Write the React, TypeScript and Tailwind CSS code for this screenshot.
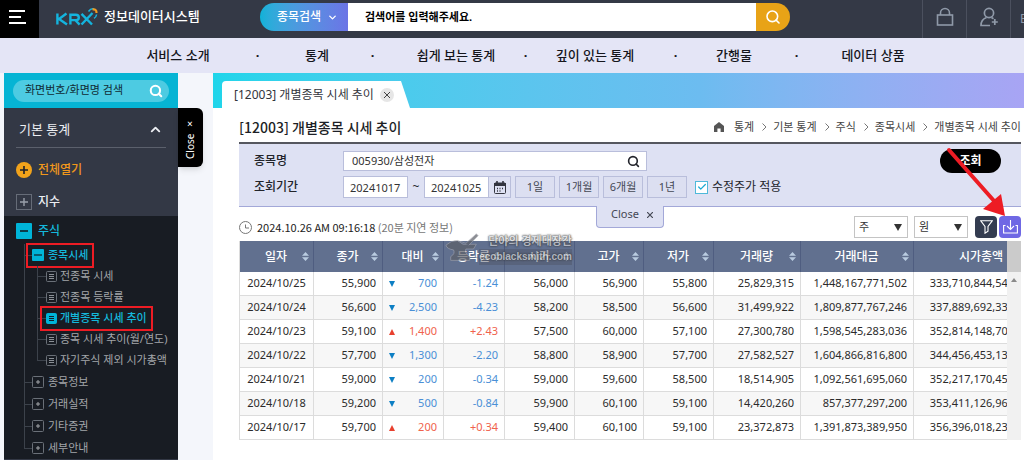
import { useState } from "react";
import { ChevronDown, ChevronUp, Search, Check } from "lucide-react";

type Quote = {
    date: string;
    close: string;
    diff: string;
    rate: string;
    up: boolean;
    open: string;
    high: string;
    low: string;
    volume: string;
    value: string;
    cap: string;
};

const QUOTES: Quote[] = [
    { date: "2024/10/25", close: "55,900", diff: "700", rate: "-1.24", up: false, open: "56,000", high: "56,900", low: "55,800", volume: "25,829,315", value: "1,448,167,771,502", cap: "333,710,844,545,000" },
    { date: "2024/10/24", close: "56,600", diff: "2,500", rate: "-4.23", up: false, open: "58,200", high: "58,500", low: "56,600", volume: "31,499,922", value: "1,809,877,767,246", cap: "337,889,692,330,000" },
    { date: "2024/10/23", close: "59,100", diff: "1,400", rate: "+2.43", up: true, open: "57,500", high: "60,000", low: "57,100", volume: "27,300,780", value: "1,598,545,283,036", cap: "352,814,148,705,000" },
    { date: "2024/10/22", close: "57,700", diff: "1,300", rate: "-2.20", up: false, open: "58,800", high: "58,900", low: "57,700", volume: "27,582,527", value: "1,604,866,816,800", cap: "344,456,453,135,000" },
    { date: "2024/10/21", close: "59,000", diff: "200", rate: "-0.34", up: false, open: "59,000", high: "59,600", low: "58,500", volume: "18,514,905", value: "1,092,561,695,060", cap: "352,217,170,450,000" },
    { date: "2024/10/18", close: "59,200", diff: "500", rate: "-0.84", up: false, open: "59,900", high: "60,100", low: "59,100", volume: "14,420,260", value: "857,377,297,200", cap: "353,411,126,960,000" },
    { date: "2024/10/17", close: "59,700", diff: "200", rate: "+0.34", up: true, open: "59,400", high: "60,100", low: "59,100", volume: "23,372,873", value: "1,391,873,389,950", cap: "356,396,018,235,000" },
];

const COLUMNS = [
    { label: "일자", width: "w-[74px]" },
    { label: "종가", width: "w-[69px]" },
    { label: "대비", width: "w-[61px]" },
    { label: "등락률", width: "w-[61px]" },
    { label: "시가", width: "w-[70px]" },
    { label: "고가", width: "w-[69px]" },
    { label: "저가", width: "w-[70px]" },
    { label: "거래량", width: "w-[87px]" },
    { label: "거래대금", width: "w-[113px]" },
    { label: "시가총액", width: "w-[129px]" },
];

const NAV = [
    { label: "서비스 소개", width: "w-16", gap: "w-[95px]" },
    { label: "통계", width: "w-6", gap: "w-[87px]" },
    { label: "쉽게 보는 통계", width: "w-20", gap: "w-[59px]" },
    { label: "깊이 있는 통계", width: "w-20", gap: "w-[81px]" },
    { label: "간행물", width: "w-9", gap: "w-[89px]" },
    { label: "데이터 상품", width: "w-16", gap: "" },
];

const STOCK_PAGES = ["전종목 시세", "전종목 등락률", "개별종목 시세 추이", "종목 시세 추이(월/연도)", "자기주식 제외 시가총액"];
const STOCK_GROUPS = ["종목정보", "거래실적", "기타증권", "세부안내"];
const CRUMBS = ["통계", "기본 통계", "주식", "종목시세", "개별종목 시세 추이"];

// --- Header ---

function Logo() {
    return (
        <a href="#" className="ml-[17px] flex items-center gap-1.5 whitespace-nowrap">
            <svg width="42" height="20" viewBox="0 0 42 20" fill="none" role="img" aria-label="KRX">
                <g stroke="#14b4de" strokeWidth="2.4">
                    <path d="M1.400 6.500v11M10.500 6.500l-7.500 5.500L11 17.500" />
                    <path d="M14.400 17.500V7.700h5.400q3 0 3 2.700t-3 2.700h-5.400M19.200 13l4.400 4.600" />
                    <path d="M25.500 6.800 36 17.500M25.500 17.500 36.500 6" />
                </g>
                <path d="M32.500 4.500q2.500-3.500 5.500-2.500" stroke="#14b4de" strokeWidth="1.500" />
                <path d="M36.500 2.500q4.200-.8 4 3.500" stroke="#f39a1c" strokeWidth="2.200" />
                <path d="M40.600 7.500q-.4 2.800-2.600 3.800" stroke="#14b4de" strokeWidth="1.500" />
            </svg>
            <span className="text-[13px] font-medium text-white">정보데이터시스템</span>
        </a>
    );
}

function Header() {
    return (
        <header className="flex h-[38px] items-center overflow-hidden bg-[#343946]">
            <button aria-label="메뉴" className="flex h-full w-[39px] shrink-0 flex-col items-start justify-center gap-1 bg-black pb-1 pl-[9px]">
                <span className="h-[2px] w-4 bg-white" />
                <span className="h-[2px] w-3 bg-white" />
                <span className="h-[2px] w-[17px] bg-white" />
            </button>
            <div className="w-[221px] shrink-0 pb-1">
                <Logo />
            </div>
            <form className="mb-1 flex h-7 w-[530px] shrink-0 overflow-hidden rounded-full" onSubmit={(e) => e.preventDefault()}>
                <button type="button" className="flex w-[88px] items-center gap-1.5 bg-linear-to-r from-[#0cb2d8] to-[#6b74e6] pl-[17px] text-xs font-medium text-white">
                    종목검색
                    <ChevronDown size={11} strokeWidth={3} />
                </button>
                <input
                    aria-label="검색어"
                    placeholder="검색어를 입력해주세요."
                    className="min-w-0 flex-1 bg-white px-[17px] text-[11px] font-bold text-black outline-none placeholder:text-black"
                />
                <button aria-label="검색" className="flex w-[34px] items-center justify-center bg-[#e8a317] text-white">
                    <Search size={16} strokeWidth={2.4} />
                </button>
            </form>
            <div className="ml-auto flex h-full shrink-0 text-[#8f99a8]">
                <button aria-label="로그인" className="flex w-11 items-center justify-center border-l border-[#4b505e] pb-1">
                    <svg width="18" height="20" viewBox="0 0 18 20" fill="none" stroke="currentColor" strokeWidth="1.6">
                        <rect x="1.5" y="8" width="15" height="10" />
                        <path d="M4.5 8V6a4.5 4.5 0 0 1 9 0v2" />
                    </svg>
                </button>
                <button aria-label="회원가입" className="flex w-[45px] items-center justify-center border-x border-[#4b505e] pb-1">
                    <svg width="20" height="20" viewBox="0 0 20 20" fill="none" stroke="currentColor" strokeWidth="1.7">
                        <circle cx="10" cy="6" r="4.6" />
                        <path d="M11 18.5H2q0-6 5.5-8M12.5 10.5l2 1.2M15.8 12v6M12.8 15h6" />
                    </svg>
                </button>
                <a href="#" className="flex w-[13px] items-center overflow-hidden pl-[9px] text-xs">ENG</a>
            </div>
        </header>
    );
}

function MainNav() {
    return (
        <nav className="h-[35px] bg-[#e4e5f6]">
            <ul className="flex h-full items-center justify-center pl-[27px] text-[13px] font-medium text-[#15161c]">
                {NAV.map((item) => (
                    <li key={item.label} className="flex">
                        <a href="#" className={`flex justify-center whitespace-nowrap ${item.width}`}>{item.label}</a>
                        {item.gap && <span className={`text-center font-bold ${item.gap}`}>·</span>}
                    </li>
                ))}
            </ul>
        </nav>
    );
}

// --- Sidebar ---

function Branch({ last = false, wide = false }: { last?: boolean; wide?: boolean }) {
    return (
        <span className={`flex shrink-0 flex-col self-stretch ${wide ? "w-[9px]" : "w-2"}`}>
            <span className="flex-1 border-b border-l border-[#3c424b]" />
            <span className={`flex-1 border-[#3c424b] ${last ? "" : "border-l"}`} />
        </span>
    );
}

function PageIcon({ active }: { active: boolean }) {
    return (
        <svg width="11" height="11" viewBox="0 0 11 11" fill="none" className="shrink-0">
            <rect x=".5" y=".5" width="10" height="10" rx="1" fill={active ? "#00b4d8" : "none"} stroke={active ? "#00b4d8" : "#6a7078"} />
            <path d="M3 3.5h5M3 5.5h5M3 7.5h5" stroke={active ? "#10202a" : "#8b9096"} />
        </svg>
    );
}

function Sidebar() {
    const [query, setQuery] = useState("");

    return (
        <aside className="w-[174px] shrink-0 bg-[#333845] text-[#eceef2]">
            <div className="flex h-[35px] items-center bg-[#06b4d4] px-[9px]">
                <label className="flex h-[22px] w-full items-center rounded-full bg-[#4dcbe2] pl-3 pr-[6px]">
                    <input
                        value={query}
                        onChange={(e) => setQuery(e.target.value)}
                        aria-label="화면번호/화면명 검색"
                        placeholder="화면번호/화면명 검색"
                        className="min-w-0 flex-1 bg-transparent text-[11px] text-[#102a33] outline-none placeholder:text-[#102a33]"
                    />
                    <Search size={14} strokeWidth={3.5} className="shrink-0 text-white" />
                </label>
            </div>
            <button className="mx-3 flex h-10 w-[150px] items-center justify-between border-b border-[#5b606c] pl-[3px] pr-[3px] pt-1 text-[13px]">
                기본 통계
                <ChevronUp size={15} strokeWidth={3} />
            </button>
            <button className="flex h-11 items-center gap-1.5 pl-3 text-xs font-medium text-[#f0971c]">
                <svg width="16" height="16" viewBox="0 0 16 16">
                    <circle cx="8" cy="8" r="8" fill="#f2a31b" />
                    <path d="M8 4v8M4 8h8" stroke="#1d2028" strokeWidth="1.6" />
                </svg>
                전체열기
            </button>
            <button className="flex h-6 items-center gap-1.5 pb-1 pl-3 text-xs font-medium">
                <svg width="16" height="16" viewBox="0 0 16 16" fill="none">
                    <rect x=".5" y=".5" width="15" height="15" stroke="#666c78" />
                    <path d="M8 4v8M4 8h8" stroke="#9aa0ab" strokeWidth="1.4" />
                </svg>
                지수
            </button>
            <div className="bg-[#181c23] text-[11px] text-[#a3a6aa]">
                <button className="flex h-7 items-center gap-1.5 pl-3 pt-0.5 text-xs font-medium text-[#14b8dc]">
                    <svg width="16" height="16" viewBox="0 0 16 16">
                        <rect width="16" height="16" rx="1" fill="#00b4d8" />
                        <path d="M4 8h8" stroke="#10202a" strokeWidth="1.6" />
                    </svg>
                    주식
                </button>
                <ul className="pl-5">
                    <li>
                        <div className="flex h-[22px] items-center">
                            <Branch />
                            <button className="flex h-[13px] items-center gap-1 whitespace-nowrap font-medium text-[#14b8dc] outline-2 outline-offset-4 outline-[#ed1c24]">
                                <svg width="12" height="12" viewBox="0 0 12 12">
                                    <rect width="12" height="12" rx="1" fill="#00b4d8" />
                                    <path d="M2 6h8" stroke="#10202a" strokeWidth="1.2" />
                                </svg>
                                종목시세
                            </button>
                        </div>
                        <ul className="border-l border-[#3c424b] pl-3">
                            {STOCK_PAGES.map((page, i) => {
                                const active = page === "개별종목 시세 추이";
                                return (
                                    <li key={page} className="flex h-[21px] items-center">
                                        <Branch wide last={i === STOCK_PAGES.length - 1} />
                                        <a
                                            href="#"
                                            className={`flex h-[13px] items-center gap-[3px] whitespace-nowrap ${active ? "font-medium text-[#14b8dc] outline-2 outline-offset-4 outline-[#ed1c24]" : ""}`}
                                        >
                                            <PageIcon active={active} />
                                            {page}
                                        </a>
                                    </li>
                                );
                            })}
                        </ul>
                    </li>
                    {STOCK_GROUPS.map((group, i) => (
                        <li key={group} className="flex h-[22px] items-center">
                            <Branch last={i === STOCK_GROUPS.length - 1} />
                            <button className="flex items-center gap-1">
                                <svg width="12" height="12" viewBox="0 0 12 12" fill="none">
                                    <rect x=".5" y=".5" width="11" height="11" rx="1" stroke="#6a7078" />
                                    <path d="M6 4v4M4 6h4" stroke="#a3a6aa" />
                                </svg>
                                {group}
                            </button>
                        </li>
                    ))}
                </ul>
            </div>
        </aside>
    );
}

// --- Content ---

function TabBar() {
    return (
        <div className="flex h-[35px] items-end bg-linear-to-r from-[#1fd5ea] via-[#6cbcf0] via-60% to-[#a8a4f4] pl-[9px]">
            <div className="flex h-[27px] w-[188px] items-center gap-1.5 rounded-tl-sm bg-white pl-3 text-xs text-[#33353c] [clip-path:polygon(0_0,calc(100%-9px)_0,100%_100%,0_100%)]">
                <span className="whitespace-nowrap">[12003] 개별종목 시세 추이</span>
                <button aria-label="탭 닫기" className="flex size-3.5 shrink-0 items-center justify-center rounded-full bg-[#e6e6e6]">
                    <svg width="6" height="6" viewBox="0 0 6 6" stroke="#444" strokeWidth="1">
                        <path d="M0 0l6 6M6 0L0 6" />
                    </svg>
                </button>
            </div>
        </div>
    );
}

function TitleRow() {
    return (
        <div className="flex h-[34px] items-center justify-between pt-1">
            <h1 className="font-['Noto_Sans_CJK_KR','Noto_Sans',sans-serif] text-sm font-medium text-[#1d1f26]">[12003] 개별종목 시세 추이</h1>
            <ol className="flex items-center text-[11px] text-[#444]">
                <li>
                    <a href="#" aria-label="홈" className="mr-2.5 block">
                        <svg width="10" height="10" viewBox="0 0 10 10" fill="#555">
                            <path d="M5 0 10 4v6H6.6V6.4H3.4V10H0V4z" />
                        </svg>
                    </a>
                </li>
                {CRUMBS.map((crumb, i) => (
                    <li key={crumb} className="flex items-center">
                        {i > 0 && (
                            <svg width="5" height="8" viewBox="0 0 5 8" fill="none" stroke="#777" className="ml-2 mr-1.5">
                                <path d="M.5.5 4 4 .5 7.500" />
                            </svg>
                        )}
                        <a href="#" className="whitespace-nowrap">{crumb}</a>
                    </li>
                ))}
            </ol>
        </div>
    );
}

function SearchPanel() {
    const [adjusted, setAdjusted] = useState(true);
    const field = "h-full border border-[#b9bedb] bg-white text-[11px] text-[#333] outline-none";

    return (
        <form className="relative flex items-start border-b border-t-2 border-b-[#a3a8d8] border-t-[#55575f] bg-[#dee1f3] pb-2 pl-[15px] pr-5 pt-[5px]" onSubmit={(e) => e.preventDefault()}>
            <div className="flex flex-col gap-[5px] pt-0.5 text-xs text-[#22242b]">
                <div className="flex h-5 items-center">
                    <label htmlFor="issue" className="w-[89px] font-medium">종목명</label>
                    <div className="flex h-full w-[304px] items-center border border-[#b9bedb] bg-white pr-[6px]">
                        <input id="issue" defaultValue="005930/삼성전자" className="min-w-0 flex-1 bg-transparent pl-2 text-[11px] text-[#333] outline-none" />
                        <button aria-label="종목 찾기">
                            <Search size={13} strokeWidth={3} />
                        </button>
                    </div>
                </div>
                <div className="flex h-[22px] items-center">
                    <label htmlFor="from" className="w-[89px] font-medium">조회기간</label>
                    <input id="from" defaultValue="20241017" className={`w-[65px] px-[6px] ${field}`} />
                    <span className="w-4 text-center">~</span>
                    <input aria-label="종료일" defaultValue="20241025" className={`w-[65px] px-[6px] ${field}`} />
                    <button aria-label="달력" className="flex h-full w-[22px] items-center justify-center border border-l-0 border-[#b9bedb]">
                        <svg width="12" height="13" viewBox="0 0 12 13" fill="none" stroke="#33353f">
                            <rect x=".5" y="2" width="11" height="10.500" rx="1" />
                            <path d="M0 3.500h12" strokeWidth="3" />
                            <path d="M3 0v3M9 0v3" strokeWidth="1.600" />
                            <path d="M3 7.500h1M5.500 7.500h1M8 7.500h1M3 10h1M5.500 10h1" strokeWidth="1.400" />
                        </svg>
                    </button>
                    <div className="ml-1 flex h-full gap-1 text-[11px] text-[#444854]">
                        {["1일", "1개월", "6개월", "1년"].map((range) => (
                            <button key={range} type="button" className="w-10 border border-[#b9bedb] bg-[#dcdff1]">
                                {range}
                            </button>
                        ))}
                    </div>
                    <label className="ml-2 flex items-center gap-1 whitespace-nowrap">
                        <span className="grid size-[13px] place-items-center">
                            <input
                                type="checkbox"
                                checked={adjusted}
                                onChange={(e) => setAdjusted(e.target.checked)}
                                className="col-start-1 row-start-1 size-[13px] appearance-none border border-[#4fb9da] bg-white"
                            />
                            {adjusted && <Check size={10} strokeWidth={3} className="pointer-events-none col-start-1 row-start-1 text-[#1ba9d4]" />}
                        </span>
                        수정주가 적용
                    </label>
                </div>
            </div>
            <button className="ml-auto h-6 w-[61px] shrink-0 rounded-full bg-black text-xs font-bold text-white">조회</button>
            <button type="button" className="absolute left-1/2 top-full flex h-[22px] w-[68px] -translate-x-1/2 items-center justify-center gap-2 rounded-b-sm border border-t-0 border-[#a3a8d8] bg-[#dee1f3] pb-1 pl-1 text-[11px] text-[#444854]">
                Close
                <svg width="6" height="6" viewBox="0 0 6 6" stroke="currentColor" strokeWidth="1.200">
                    <path d="M0 0l6 6M6 0L0 6" />
                </svg>
            </button>
        </form>
    );
}

function UnitSelect({ label, value }: { label: string; value: string }) {
    return (
        <div className="grid h-full w-[54px] items-center">
            <select aria-label={label} defaultValue={value} className="col-start-1 row-start-1 h-full appearance-none border border-[#c4c4c4] bg-white pl-1 text-[11px] text-[#333] outline-none">
                <option>{value}</option>
            </select>
            <svg width="8" height="7" viewBox="0 0 8 7" fill="#333" className="pointer-events-none col-start-1 row-start-1 mr-1.5 justify-self-end">
                <path d="M0 0h8L4 7z" />
            </svg>
        </div>
    );
}

function Toolbar() {
    return (
        <div className="flex h-[34px] items-center pb-[3px] pt-[9px] text-[11px]">
            <svg width="13" height="13" viewBox="0 0 13 13" fill="none" stroke="#777">
                <circle cx="6.500" cy="6.500" r="6" />
                <path d="M6.500 3.500v3.500H10" />
            </svg>
            <p className="ml-[5px] whitespace-nowrap font-['Noto_Sans_CJK_KR',sans-serif] text-[#222]">
                2024.10.26 AM 09:16:18 <span className="text-[#777]">(20분 지연 정보)</span>
            </p>
            <div className="ml-auto flex h-full">
                <UnitSelect label="수량 단위" value="주" />
                <div className="ml-1.5 flex">
                    <UnitSelect label="금액 단위" value="원" />
                </div>
                <button aria-label="필터" className="ml-[7px] flex w-[22px] items-center justify-center rounded-sm bg-[#333c50]">
                    <svg width="13" height="14" viewBox="0 0 13 14" fill="none" stroke="#fff" strokeWidth="1.100">
                        <path d="M.8.8h11.400L8 6.500v4.700l-3 2V6.500z" />
                    </svg>
                </button>
                <button aria-label="다운로드" className="ml-0.5 flex w-[22px] items-center justify-center rounded-sm bg-[#6f68e4]">
                    <svg width="15" height="14" viewBox="0 0 15 14" fill="none" stroke="#fff" strokeWidth="1.100">
                        <path d="M7.500 0v9.500M4 6l3.500 3.500L11 6M2.500 5.500H.6v7.500h13.800V5.500h-1.900" />
                    </svg>
                </button>
            </div>
        </div>
    );
}

function QuoteTable() {
    const cell = "border-r border-[#dcdcdc] pr-1.5 text-right";

    return (
        <div className="flex">
            <div className="min-w-0 flex-1 overflow-hidden border-l border-[#dcdcdc]">
                <table className="w-[803px] min-w-full table-fixed border-separate border-spacing-0 text-[11px] text-[#2b2b2b]">
                    <thead>
                        <tr className="h-[31px] text-xs text-white">
                            {COLUMNS.map((col, i) => (
                                <th key={col.label} className={`border-r border-[#4f5d80] bg-[#61708f] p-0 font-medium ${col.width}`}>
                                    <div className="flex items-center pr-1">
                                        <span className="flex-1 whitespace-nowrap pl-2.5 text-center">{col.label}</span>
                                        {i < COLUMNS.length - 1 && (
                                            <svg width="7" height="9" viewBox="0 0 7 9" fill="#b9cbe0" className="shrink-0">
                                                <path d="M0 3.700 3.500 0 7 3.700zM0 5.300 3.500 9 7 5.300z" />
                                            </svg>
                                        )}
                                    </div>
                                </th>
                            ))}
                        </tr>
                    </thead>
                    <tbody>
                        {QUOTES.map((q) => (
                            <tr key={q.date} className="h-6 even:bg-[#f7f7f7] [&>td]:border-b">
                                <td className="border-r border-[#dcdcdc] text-center">{q.date}</td>
                                <td className={cell}>{q.close}</td>
                                <td className={cell}>
                                    <div className={`flex items-center justify-between pl-1.5 ${q.up ? "text-[#f0624c]" : "text-[#4a8fd6]"}`}>
                                        <svg width="6" height="6" viewBox="0 0 6 6" fill={q.up ? "#e8402e" : "#0d7fc4"}>
                                            <path d={q.up ? "M3 0 6 6H0z" : "M0 0h6L3 6z"} />
                                        </svg>
                                        {q.diff}
                                    </div>
                                </td>
                                <td className={`${cell} ${q.up ? "text-[#f0624c]" : "text-[#4a8fd6]"}`}>{q.rate}</td>
                                <td className={cell}>{q.open}</td>
                                <td className={cell}>{q.high}</td>
                                <td className={cell}>{q.low}</td>
                                <td className={cell}>{q.volume}</td>
                                <td className={cell}>{q.value}</td>
                                <td className={cell}>{q.cap}</td>
                            </tr>
                        ))}
                    </tbody>
                </table>
            </div>
            <div className="flex w-3.5 shrink-0 flex-col bg-[#f1f1f1]">
                <div className="h-[31px] bg-[#cbcbcb]" />
                <svg width="6" height="4" viewBox="0 0 6 4" fill="#8a8a8a" className="mt-1.5 self-center">
                    <path d="M0 4 3 0l3 4z" />
                </svg>
            </div>
        </div>
    );
}

function Watermark() {
    return (
        <div className="pointer-events-none absolute -top-2 left-[206px] flex w-[127px] justify-between opacity-70">
            <svg width="36" height="32" viewBox="0 0 36 32" fill="#5c5f68" stroke="#a9abb2" strokeWidth=".8">
                <path d="M1 12q5-5 12-5l6 4h14l-3 5h-8q-2 4 4 8v4H6v-4q5-3 3-7-7-1-8-5z" />
                <path d="M13 7 22 10 33 0l2 2-10 10" />
            </svg>
            <div className="flex flex-col items-end whitespace-nowrap font-bold leading-4 text-[#d2d3d6] [text-shadow:0_0_2px_#333,0_0_2px_#333,0_0_1px_#333]">
                <p className="text-[11px]">단야의 경제대장간</p>
                <p className="bg-[#4c5262]/60 font-['Liberation_Sans',sans-serif] text-[10px]">ecoblacksmith.com</p>
            </div>
        </div>
    );
}

function Arrow() {
    return (
        <svg width="64" height="72" viewBox="0 0 64 72" fill="#ed1c24" className="pointer-events-none absolute right-[15px] top-[73px]">
            <path d="M4 4 50 56" stroke="#ed1c24" strokeWidth="4" strokeLinecap="round" />
            <path d="M60 70 38 63 56 48z" />
        </svg>
    );
}

export default function App() {
    return (
        <div className="flex min-h-screen flex-col overflow-hidden bg-[#f4f6fb] font-['Noto_Sans','Noto_Sans_CJK_KR',sans-serif]">
            <Header />
            <MainNav />
            <div className="flex flex-1 pl-1">
                <Sidebar />
                <button className="mt-[35px] flex h-[59px] w-[25px] shrink-0 items-center justify-center rounded-r-md bg-black text-white shadow-md">
                    <span className="rotate-180 text-[10px] [writing-mode:vertical-rl]">Close ×</span>
                </button>
                <main className="relative ml-2.5 min-w-0 flex-1 bg-white">
                    <TabBar />
                    <div className="pl-[26px] pr-[3px]">
                        <TitleRow />
                        <SearchPanel />
                        <Toolbar />
                        <div className="relative">
                            <QuoteTable />
                            <Watermark />
                        </div>
                    </div>
                    <Arrow />
                </main>
            </div>
        </div>
    );
}
